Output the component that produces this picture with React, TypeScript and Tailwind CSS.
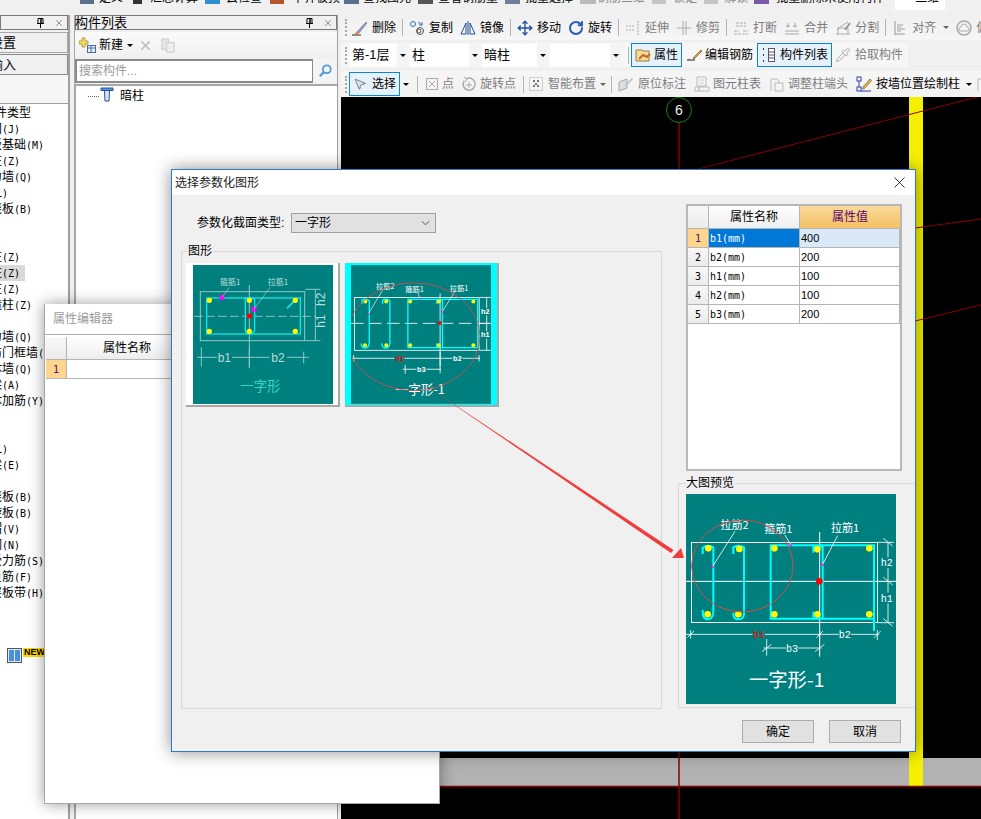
// App.tsx
import React from 'react';
import { Move, RotateCw, Pipette, MousePointer2, X } from 'lucide-react';

const topItems = [
  { gap: 'ml-[80px]', stub: 'w-[14px] bg-[#5a6f8c]', text: '定义', textGap: 'ml-[5px]' },
  { gap: 'ml-[10px]', stub: 'w-[9px] bg-[#333333]', text: '汇总计算', textGap: 'ml-[8px]' },
  { gap: 'ml-[7px]', stub: 'w-[15px] bg-[#2f8fd0]', text: '云检查', textGap: 'ml-[6px]' },
  { gap: 'ml-[8px]', stub: 'w-[14px] bg-[#b5562a]', text: '平齐板顶', textGap: 'ml-[8px]' },
  { gap: 'ml-[4px]', stub: 'w-[15px] bg-[#5a6f8c]', text: '查找图元', textGap: 'ml-[4px]' },
  { gap: 'ml-[7px]', stub: 'w-[15px] bg-[#555555]', text: '查看钢筋量', textGap: 'ml-[5px]' },
  { gap: 'ml-[7px]', stub: 'w-[15px] bg-[#6f7f99]', text: '批量选择', textGap: 'ml-[5px]' },
  { gap: 'ml-[7px]', stub: 'w-[16px] bg-[#b9b9b9]', text: '钢筋三维', textGap: 'ml-[1px] text-[#8a8a8a]' },
  { gap: 'ml-[7px]', stub: 'w-[14px] bg-[#c4c4c4]', text: '锁定', textGap: 'ml-[7px] text-[#8a8a8a]' },
  { gap: 'ml-[7px]', stub: 'w-[14px] bg-[#c4c4c4]', text: '解锁', textGap: 'ml-[6px] text-[#8a8a8a]' },
  { gap: 'ml-[6px]', stub: 'w-[15px] bg-[#7a5aa8]', text: '批量删除未使用构件', textGap: 'ml-[7px]' },
];

const treeRows: [string, string][] = [
  ['', ''],
  ['轴网', '(J)'],
  ['筏板基础', '(M)'],
  ['框柱', '(Z)'],
  ['剪力墙', '(Q)'],
  ['梁', '(L)'],
  ['现浇板', '(B)'],
  ['', ''],
  ['', ''],
  ['框柱', '(Z)'],
  ['暗柱', '(Z)'],
  ['端柱', '(Z)'],
  ['构造柱', '(Z)'],
  ['', ''],
  ['剪力墙', '(Q)'],
  ['人防门框墙', '(Q)'],
  ['砌体墙', '(Q)'],
  ['暗梁', '(A)'],
  ['砌体加筋', '(Y)'],
  ['', ''],
  ['', ''],
  ['梁', '(L)'],
  ['圈梁', '(E)'],
  ['', ''],
  ['现浇板', '(B)'],
  ['螺旋板', '(B)'],
  ['柱帽', '(V)'],
  ['板洞', '(N)'],
  ['板受力筋', '(S)'],
  ['板负筋', '(F)'],
  ['楼层板带', '(H)'],
];

const params = [
  ['1', 'b1(mm)', '400'],
  ['2', 'b2(mm)', '200'],
  ['3', 'h1(mm)', '100'],
  ['4', 'h2(mm)', '100'],
  ['5', 'b3(mm)', '200'],
];

const Ico = ({ children }: { children: React.ReactNode }) => (
  <svg viewBox="0 0 16 16" className="w-[16px] h-[16px] shrink-0" fill="none">
    {children}
  </svg>
);

const icons: Record<string, React.ReactNode> = {
  brush: (
    <Ico>
      <path d="M0 15h9" stroke="#222" />
      <path d="M5 12l9-10 1 1-8 10z" fill="#8b95c9" stroke="#555c88" strokeWidth=".5" />
      <path d="M2 14c2 0 2-3 4-3l1 2c-1 1-3 1-5 1z" fill="#e07a3a" />
    </Ico>
  ),
  copy: (
    <Ico>
      <circle cx="4" cy="4" r="2.5" stroke="#3b6ea8" />
      <circle cx="11" cy="11" r="3.5" stroke="#555" />
      <circle cx="10" cy="11" r="2" stroke="#555" />
      <path d="M9 2l4 3m0 0V2m0 3h-3" stroke="#3b6ea8" />
    </Ico>
  ),
  mirror: (
    <Ico>
      <path d="M8 1v14" stroke="#1f4e96" />
      <path d="M6 3L1 14h5zM10 3l5 11h-5z" stroke="#1f4e96" />
    </Ico>
  ),
  extend: (
    <Ico>
      <path d="M1 6h8M1 10h8M13 1v14" stroke="#aaa" strokeDasharray="2 1" />
    </Ico>
  ),
  trim: (
    <Ico>
      <path d="M7 1v14M10 1v14M1 8h14" stroke="#aaa" />
    </Ico>
  ),
  breakLine: (
    <Ico>
      <path d="M1 11h5M10 11h5M1 14h14M3 3h10M3 6h10" stroke="#aaa" strokeDasharray="3 1" />
    </Ico>
  ),
  merge: (
    <Ico>
      <path d="M1 11h14M1 14h14M4 3v5M11 3v5M2 6h4M9 6h4" stroke="#aaa" />
    </Ico>
  ),
  split: (
    <Ico>
      <path d="M1 14h14M2 9l11-7M3 14V8h10v6" stroke="#aaa" />
      <path d="M10 10l5-7" stroke="#999" strokeWidth="2" />
    </Ico>
  ),
  align: (
    <Ico>
      <path d="M3 1v14M3 14h10M6 5h5M6 9h7" stroke="#999" />
      <rect x="5" y="4" width="4" height="8" fill="#ccc" />
    </Ico>
  ),
  cloud: (
    <Ico>
      <circle cx="8" cy="8" r="7" stroke="#aaa" strokeWidth="1.5" />
      <path d="M5 11h6a2 2 0 000-4 3 3 0 00-6 0 2 2 0 000 4z" stroke="#aaa" />
    </Ico>
  ),
  props: (
    <Ico>
      <path d="M1 3h6l1 1h6v10H1z" fill="#f4dc9c" stroke="#a07a30" />
      <path d="M4 12l4-4 4 2 3-3" stroke="#c46a1a" strokeWidth="2" />
    </Ico>
  ),
  edit: (
    <Ico>
      <path d="M0 13h8" stroke="#222" />
      <path d="M1 13l2-1M6 11l8-8 1 1-8 8z" fill="#e6b34a" stroke="#6a4a1a" strokeWidth=".7" />
    </Ico>
  ),
  list: (
    <Ico>
      <path d="M2 2h2M2 8h2M2 14h2" stroke="#333" strokeWidth="2" strokeDasharray="1 1" />
      <rect x="7.500" y="1.500" width="6" height="13" fill="#fff" stroke="#556" />
      <path d="M8 5h5M8 8h5M8 11h5" stroke="#556" />
    </Ico>
  ),
  point: (
    <Ico>
      <rect x="2.500" y="2.500" width="11" height="11" stroke="#aaa" />
      <path d="M5 5l6 6M11 5l-6 6" stroke="#aaa" />
    </Ico>
  ),
  rotatePt: (
    <Ico>
      <path d="M5 3a6 6 0 11-2 2" stroke="#aaa" strokeWidth="1.5" />
      <path d="M8 6v6M5 9h6M3 1l3 2-2 3" stroke="#aaa" />
    </Ico>
  ),
  smart: (
    <Ico>
      <rect x="1.500" y="1.500" width="13" height="13" stroke="#aaa" strokeDasharray="1 1" />
      <path d="M5 5h2M9 5h2M5 10h2M9 10h2M8 7v2" stroke="#777" strokeWidth="2" />
    </Ico>
  ),
  label: (
    <Ico>
      <path d="M1 15V6l8-3v9z" fill="#ddd" stroke="#aaa" />
      <path d="M7 9l7-7 1 1-7 7z" fill="#bbb" />
    </Ico>
  ),
  table: (
    <Ico>
      <path d="M3 1h9v9H3zM1 11h4v4H1zM5 11h10v4H5z" stroke="#bbb" />
      <path d="M5 4h5M5 7h5" stroke="#ccc" />
    </Ico>
  ),
  doc: (
    <Ico>
      <path d="M2 15V3h6l2 2v2h4v8H6V7h4" stroke="#bbb" />
    </Ico>
  ),
  draw: (
    <Ico>
      <rect x="1" y="1" width="4" height="4" stroke="#2a3fa8" />
      <rect x="1" y="11" width="4" height="4" stroke="#2a3fa8" />
      <path d="M5 15h10M3 5v6" stroke="#2a3fa8" />
      <path d="M7 11l7-8 1.500 1.500-7 8-2 .5z" fill="#e6b34a" stroke="#6a4a1a" strokeWidth=".6" />
    </Ico>
  ),
};

const Caret = ({ tone = 'border-t-black' }: { tone?: string }) => (
  <span className={`block w-0 h-0 shrink-0 border-x-[3px] border-x-transparent border-t-[3px] ${tone}`} />
);

const Grip = () => <span className="block shrink-0 w-0 h-[17px] border-l-2 border-dotted border-[#a8a8a8]" />;

const Sep = () => <span className="block shrink-0 w-px h-[17px] bg-[#b4b4b4] -mx-px" />;

const Tool = ({ icon, label, off = false, gap = 'gap-[4px]' }: { icon: React.ReactNode; label: string; off?: boolean; gap?: string }) => (
  <span className={`flex items-center shrink-0 ${gap} ${off ? 'text-[#7d7d7d]' : 'text-black'}`}>
    {icon}
    <span>{label}</span>
  </span>
);

const Combo = ({ text, width }: { text: string; width: string }) => (
  <span className={`flex items-center justify-between h-[23px] bg-white shrink-0 ${width}`}>
    <span className="pl-[2px] text-[13px]">{text}</span>
    <span className="flex items-center justify-center w-[11px] h-full bg-[#f4f4f4]">
      <Caret />
    </span>
  </span>
);

const PanelHead = ({ title }: { title: string }) => (
  <div className="flex items-center justify-between h-[15px] border border-[#7a7a7a] bg-[#f0f0f0] pr-[3px] text-[13px] leading-[13px]">
    <span className="-ml-px">{title}</span>
    <span className="flex items-center gap-[9px]">
      <svg viewBox="0 0 9 10" className="w-[9px] h-[10px]" fill="none">
        <path d="M2 .5h5v5H2zM1 5.500h7M4.500 6v4" stroke="#000" />
        <path d="M5 1v4" stroke="#000" strokeWidth="1.500" />
      </svg>
      <X size={10} strokeWidth={1} className="text-black" />
    </span>
  </div>
);

const LeftPanel = () => (
  <div className="w-[70px] shrink-0 flex flex-col overflow-hidden border-r-2 border-[#a0a0a0] bg-white">
    <PanelHead title="" />
    <div className="bg-[#f0f0f0] pt-[2px]">
      <div className="h-[21px] border border-[#a8a8a8] flex items-center text-[13px] -ml-[12px] mb-px">
        <span className="-ml-[12px]">楼设置</span>
      </div>
      <div className="h-[21px] border border-[#8a8a8a] flex items-center text-[13px] -ml-[12px]">
        <span className="-ml-[12px]">输输入</span>
      </div>
      <div className="h-[28px] bg-[#f6f6f6]" />
    </div>
    <div className="flex-1 border-t border-[#a0a0a0] pt-[1px] text-[12px]">
      {treeRows.map((row, i) => (
        <div key={i} className={`h-[16px] leading-[16px] whitespace-nowrap ${i === 10 ? 'bg-[#d9d9d9] w-[25px]' : ''}`}>
          {i === 0 ? (
            <span className="block -ml-[41px]">常用构件类型</span>
          ) : (
            <span className="block -ml-[22px]">
              {row[0]}
              <span className="font-['DejaVu_Sans_Mono',monospace] text-[10px]">{row[1]}</span>
            </span>
          )}
        </div>
      ))}
      <div className="mt-[47px] flex items-center gap-[7px] -ml-[1px]">
        <span className="w-px h-[12px] bg-black" />
        <span className="flex gap-[1px] items-center justify-center w-[15px] h-[15px] border border-[#555] bg-[#dbe9f8]">
          <span className="w-[5px] h-[11px] bg-[#4a90d9]" />
          <span className="w-[5px] h-[11px] bg-[#4a90d9]" />
        </span>
        <span className="-ml-[6px] -mt-[6px] h-[9px] leading-[9px] px-px bg-[#ffd700] font-['Liberation_Sans',sans-serif] text-[9px] font-bold">
          NEW
        </span>
      </div>
    </div>
  </div>
);

const ListPanel = () => (
  <div className="w-[263px] shrink-0 flex flex-col border-r border-[#a0a0a0] bg-[#f0f0f0]">
    <PanelHead title="构件列表" />
    <div className="flex items-center h-[26px] mt-[2px] bg-gradient-to-b from-[#fafafa] to-[#f0f0f0] pl-[4px] text-[12px]">
      <svg viewBox="0 0 17 17" className="w-[17px] h-[17px] shrink-0" fill="none">
        <path d="M3 1h3v3h3v3H6v3H3V7H0V4h3z" fill="#f5dd6a" stroke="#a8902a" strokeWidth=".8" />
        <rect x="8.500" y="8.500" width="8" height="7" fill="#e8f0fa" stroke="#4a6fa8" />
        <path d="M8 11h8M12 9v6" stroke="#4a6fa8" />
      </svg>
      <span className="ml-[3px]">新建</span>
      <span className="ml-[4px]">
        <Caret />
      </span>
      <X size={15} strokeWidth={2.5} className="ml-[5px] text-[#bdbdbd]" />
      <svg viewBox="0 0 16 16" className="w-[15px] h-[15px] ml-[8px]" fill="none">
        <path d="M1 1h7v11H1z" fill="#e6e6e6" stroke="#c8c8c8" />
        <path d="M6 5h8v10H6z" fill="#efefef" stroke="#c8c8c8" />
      </svg>
    </div>
    <div className="flex h-[24px] mt-[1px]">
      <div className="flex-1 border-2 border-[#8a8a8a] border-r-0 bg-white flex items-center pl-[2px] text-[12px] text-[#9a9a9a]">
        搜索构件...
      </div>
      <div className="w-[25px] flex items-center justify-center bg-[#f4f4f4] border-l border-[#8a8a8a]">
        <svg viewBox="0 0 16 16" className="w-[14px] h-[14px]" fill="none">
          <circle cx="10" cy="6" r="4.500" stroke="#4a9de0" strokeWidth="2" />
          <path d="M7 9l-5 5" stroke="#4a9de0" strokeWidth="2.500" />
        </svg>
      </div>
    </div>
    <div className="flex-1 mt-[1px] bg-white border-t-2 border-l border-[#a8a8a8] pl-[12px] pt-[1px] flex items-start">
      <span className="w-[11px] mt-[9px] border-t border-dotted border-[#666]" />
      <svg viewBox="0 0 14 15" className="w-[14px] h-[15px] ml-px" fill="none">
        <path d="M1 1h12v2.500H1z" fill="#5b8fd6" stroke="#24519c" />
        <path d="M4.500 4l.5 10h4l.5-10" fill="#d7e6f8" stroke="#24519c" />
      </svg>
      <span className="ml-[6px] text-[12px] leading-[18px]">暗柱</span>
    </div>
  </div>
);

const ToolRows = () => (
  <div className="h-[82px] shrink-0 flex flex-col bg-[#f0f0f0] text-[12px]">
    <div className="h-[25px] flex items-center gap-[7px] pl-[4px] bg-gradient-to-b from-[#f0f0f0] to-[#f6f6f6] whitespace-nowrap overflow-hidden">
      <span className="mr-[-2px]">
        <Grip />
      </span>
      <Tool icon={icons.brush} label="删除" />
      <Sep />
      <Tool icon={icons.copy} label="复制" />
      <Tool icon={icons.mirror} label="镜像" />
      <Sep />
      <Tool icon={<Move size={16} strokeWidth={2} className="text-[#1f4e96]" />} label="移动" />
      <Tool icon={<RotateCw size={16} strokeWidth={3} className="text-[#2a5cb8]" />} label="旋转" />
      <Sep />
      <Tool icon={icons.extend} label="延伸" off />
      <Tool icon={icons.trim} label="修剪" off />
      <Sep />
      <Tool icon={icons.breakLine} label="打断" off />
      <Tool icon={icons.merge} label="合并" off />
      <Tool icon={icons.split} label="分割" off />
      <Sep />
      <Tool icon={icons.align} label="对齐" off />
      <Caret tone="border-t-[#666666]" />
      <Tool icon={icons.cloud} label="偏移" off />
    </div>
    <div className="w-[567px] h-[24px] mt-[3px] flex items-center pl-[4px] bg-[#f6f6f6] whitespace-nowrap">
      <Grip />
      <span className="ml-[3px] flex gap-[2px]">
        <Combo text="第-1层" width="w-[58px]" />
        <Combo text="柱" width="w-[70px]" />
        <Combo text="暗柱" width="w-[66px]" />
        <Combo text="" width="w-[71px]" />
      </span>
      <span className="ml-[8px] mr-[2px]">
        <Sep />
      </span>
      <span className="h-[24px] w-[51px] border border-[#0a84e0] bg-[#e5f1fb] flex items-center justify-center gap-[3px] shrink-0">
        {icons.props}
        <span>属性</span>
      </span>
      <span className="ml-[4px] w-[70px] flex items-center gap-[2px] shrink-0 pl-[1px]">
        {icons.edit}
        <span>编辑钢筋</span>
      </span>
      <span className="ml-[1px] h-[24px] w-[75px] border border-[#0a84e0] bg-[#e5f1fb] flex items-center justify-center gap-[3px] shrink-0">
        {icons.list}
        <span>构件列表</span>
      </span>
      <span className="ml-[3px] flex items-center gap-[4px] shrink-0 text-[#7d7d7d]">
        <Pipette size={16} strokeWidth={1.5} className="text-[#b0b0b0]" />
        <span>拾取构件</span>
      </span>
    </div>
    <div className="h-[26px] mt-[4px] flex items-center pl-[4px] bg-gradient-to-b from-[#f6f6f6] to-[#f2f2f2] whitespace-nowrap overflow-hidden">
      <Grip />
      <span className="ml-[2px] h-[24px] w-[51px] border border-[#0a84e0] bg-[#e5f1fb] flex items-center gap-[5px] pl-[3px] shrink-0">
        <MousePointer2 size={14} strokeWidth={1} className="text-[#333]" fill="#dbe6f5" />
        <span>选择</span>
      </span>
      <span className="ml-[3px]">
        <Caret />
      </span>
      <span className="ml-[9px]">
        <Sep />
      </span>
      <span className="ml-[6px]">
        <Tool icon={icons.point} label="点" off gap="gap-[2px]" />
      </span>
      <span className="ml-[7px]">
        <Tool icon={icons.rotatePt} label="旋转点" off gap="gap-[3px]" />
      </span>
      <span className="ml-[8px]">
        <Sep />
      </span>
      <span className="ml-[4px]">
        <Tool icon={icons.smart} label="智能布置" off />
      </span>
      <span className="ml-[4px]">
        <Caret tone="border-t-[#666666]" />
      </span>
      <span className="ml-[6px]">
        <Sep />
      </span>
      <span className="ml-[6px]">
        <Tool icon={icons.label} label="原位标注" off />
      </span>
      <span className="ml-[8px]">
        <Tool icon={icons.table} label="图元柱表" off gap="gap-[3px]" />
      </span>
      <span className="ml-[8px]">
        <Tool icon={icons.doc} label="调整柱端头" off gap="gap-[3px]" />
      </span>
      <span className="ml-[8px]">
        <Tool icon={icons.draw} label="按墙位置绘制柱" />
      </span>
      <span className="ml-[6px]">
        <Caret />
      </span>
      <span className="ml-[4px]">{icons.doc}</span>
    </div>
  </div>
);

const Canvas = () => (
  <div className="flex-1 min-h-0 bg-black overflow-hidden">
    <svg viewBox="341 97 640 722" className="block w-[640px] h-[722px]" fill="none">
      <rect x="341" y="758" width="640" height="28" fill="#b2b2b2" />
      <rect x="909" y="97" width="14" height="689" fill="#f5f000" />
      <path d="M679 122V819M341 786.500H981" stroke="#8b0000" strokeWidth="1.500" />
      <path d="M698 169L981 96M915 228L981 219M915 321L981 305" stroke="#8b0000" />
      <circle cx="679" cy="110" r="12.500" stroke="#0a8a0a" />
      <text x="679" y="115" textAnchor="middle" fill="#eeeeee" fontSize="14" className="font-['Liberation_Sans',sans-serif]">
        6
      </text>
    </svg>
  </div>
);

const Editor = () => (
  <div className="absolute left-[44px] top-[304px] w-[396px] h-[500px] bg-white border border-[#a8a8a8] border-t-0 shadow-[0_0_14px_rgba(0,0,0,0.4)] text-[12px]">
    <div className="h-[31px] border-b border-[#b0b0b0] flex items-center pl-[8px] text-[#9a9a9a]">属性编辑器</div>
    <div className="pl-[1px] pt-[2px]">
      <div className="flex h-[23px] border-b border-[#b5b5b5]">
        <span className="w-[21px] bg-gradient-to-b from-[#f8f8f8] to-[#ebebeb] border-r border-[#b5b5b5]" />
        <span className="w-[120px] flex items-center justify-center bg-gradient-to-b from-white to-[#eeeeee]">属性名称</span>
      </div>
      <div className="flex h-[19px] border-b border-[#b5b5b5]">
        <span className="w-[21px] bg-[#fdd58c] border-r border-[#b5b5b5] flex items-center justify-center font-['DejaVu_Sans_Mono',monospace] text-[10px] text-[#50107a]">
          1
        </span>
      </div>
    </div>
  </div>
);

const ThumbOne = () => (
  <svg viewBox="63 285 420 417" className="block w-[140px] h-[139px]" fill="none">
    <rect x="63" y="285" width="420" height="417" fill="#007f7f" />
    <rect x="85" y="365" width="313" height="147" stroke="#8fc8c4" strokeWidth="3" />
    <path d="M66 439H430" stroke="#c8e4e0" strokeWidth="2" strokeDasharray="26 10" />
    <path d="M232 345V595" stroke="#8fc8c4" strokeWidth="3" />
    <rect x="104" y="384" width="281" height="108" stroke="#16e4e4" strokeWidth="4" />
    <path d="M220 392V480Q220 492 232 492T248 480V392Q248 384 232 384T220 392" stroke="#16e4e4" strokeWidth="4" />
    <path d="M345 415L368 392" stroke="#16e4e4" strokeWidth="5" />
    <g fill="#ffff00">
      <circle cx="112" cy="391" r="8" />
      <circle cx="232" cy="391" r="8" />
      <circle cx="370" cy="391" r="8" />
      <circle cx="112" cy="484" r="8" />
      <circle cx="232" cy="484" r="8" />
      <circle cx="370" cy="484" r="8" />
    </g>
    <rect x="225" y="431" width="14" height="14" fill="#ff0000" />
    <rect x="143" y="375" width="14" height="14" fill="#ff00ff" />
    <rect x="239" y="411" width="14" height="14" fill="#ff00ff" />
    <path d="M150 382L172 352M246 418L294 352" stroke="#a8d4d0" strokeWidth="2" />
    <path d="M75 562H135M180 562H292M345 562H410M88 532V590M232 532V590M395 545V580M400 358H445M400 512H445M430 358V512" stroke="#8fc8c4" strokeWidth="3" />
    <g fill="#bcdcd8" fontSize="24" textAnchor="middle" className="font-['Noto_Sans_CJK_SC',sans-serif]">
      <text x="175" y="346">箍筋1</text>
      <text x="318" y="346">拉筋1</text>
    </g>
    <g fill="#bcdcd8" fontSize="36" textAnchor="middle" className="font-['Liberation_Sans',sans-serif]">
      <text x="157" y="575">b1</text>
      <text x="318" y="575">b2</text>
      <text x="470" y="400" transform="rotate(-90 458 400)">h2</text>
      <text x="470" y="465" transform="rotate(-90 458 465)">h1</text>
    </g>
    <text x="265" y="662" textAnchor="middle" fill="#30d8c8" fontSize="40" className="font-['Noto_Sans_CJK_SC',sans-serif]">
      一字形
    </text>
  </svg>
);

const ThumbTwo = () => (
  <svg viewBox="537 285 421 417" className="block w-[140px] h-[139px]" fill="none">
    <rect x="537" y="285" width="421" height="417" fill="#007f7f" />
    <rect x="547.500" y="382" width="375" height="159" stroke="#ffffff" strokeWidth="2.500" />
    <path d="M537 460H958" stroke="#ffffff" strokeWidth="2.500" strokeDasharray="38 16" />
    <path d="M805 370V590" stroke="#ffffff" strokeWidth="2.500" />
    <g stroke="#00ffff" strokeWidth="4">
      <path d="M708 533V388H918V533H708" />
      <path d="M795 402V390H812V533H795V520" />
      <path d="M570 402V390Q582 384 592 392V520Q590 534 578 534Q568 534 568 520" />
      <path d="M632 402V390Q644 384 654 392V520Q652 534 640 534Q630 534 630 520" />
    </g>
    <g fill="#ffff00">
      <circle cx="580" cy="394" r="6" />
      <circle cx="643" cy="394" r="6" />
      <circle cx="715" cy="394" r="6" />
      <circle cx="801" cy="394" r="6" />
      <circle cx="905" cy="394" r="6" />
      <circle cx="579" cy="526" r="6" />
      <circle cx="643" cy="526" r="6" />
      <circle cx="715" cy="526" r="6" />
      <circle cx="801" cy="526" r="6" />
      <circle cx="905" cy="526" r="6" />
    </g>
    <circle cx="804" cy="459" r="6" fill="#ff0000" />
    <g fill="#ff00ff">
      <circle cx="590" cy="430" r="3" />
      <circle cx="745" cy="385" r="3" />
      <circle cx="812" cy="424" r="3" />
    </g>
    <path d="M590 430L632 360M745 385L738 368M812 424L848 366" stroke="#ffffff" strokeWidth="2" />
    <path d="M540 565H925M692 598H808M545 555V575M805 545V610M922 555V575M700 585V612M945 382V541M925 382H958M925 460H958M925 541H958" stroke="#ffffff" strokeWidth="2.500" />
    <g fontSize="22" textAnchor="middle" className="font-['Noto_Sans_CJK_SC',sans-serif]" fill="#ffffff">
      <text x="640" y="356">拉筋2</text>
      <text x="728" y="366">箍筋1</text>
      <text x="862" y="362">拉筋1</text>
    </g>
    <g fontSize="22" textAnchor="middle" fontWeight="700" className="font-['Liberation_Mono',monospace]">
      <rect x="926" y="414" width="30" height="22" fill="#007f7f" />
      <rect x="926" y="484" width="30" height="22" fill="#007f7f" />
      <rect x="668" y="556" width="30" height="20" fill="#007f7f" />
      <rect x="842" y="556" width="30" height="20" fill="#007f7f" />
      <rect x="734" y="588" width="30" height="20" fill="#007f7f" />
      <text x="941" y="432" fill="#ffffff">h2</text>
      <text x="941" y="502" fill="#ffffff">h1</text>
      <text x="683" y="574" fill="#ff0000">b1</text>
      <text x="857" y="574" fill="#ffffff">b2</text>
      <text x="749" y="606" fill="#ffffff">b3</text>
    </g>
    <text x="745" y="672" textAnchor="middle" fill="#ffffff" fontSize="38" className="font-['Noto_Sans_CJK_SC',sans-serif]">
      一字形-1
    </text>
    <ellipse cx="725" cy="500" rx="200" ry="162" stroke="#d84848" strokeWidth="2.500" />
  </svg>
);

const BigPreview = () => (
  <svg viewBox="48 72 630 630" className="block w-[210px] h-[210px]" fill="none">
    <rect x="48" y="72" width="630" height="630" fill="#007f7f" />
    <rect x="64.500" y="217.500" width="558" height="240" stroke="#ffffff" strokeWidth="3" />
    <path d="M48 334H678M449 186V560" stroke="#ffffff" strokeWidth="3" />
    <g stroke="#00ffff" strokeWidth="6">
      <path d="M612 483V226H302V446H612" />
      <path d="M430 248V230H458V445H430V425" />
      <path d="M98 252V234Q112 222 130 232V426Q128 448 112 448Q98 448 98 420" />
      <path d="M190 252V232Q206 222 222 232V432Q220 448 206 448Q190 448 190 428" />
    </g>
    <g fill="#ffff00">
      <circle cx="115" cy="235" r="10" />
      <circle cx="208" cy="237" r="10" />
      <circle cx="313" cy="235" r="10" />
      <circle cx="442" cy="238" r="10" />
      <circle cx="598" cy="235" r="10" />
      <circle cx="113" cy="433" r="10" />
      <circle cx="205" cy="433" r="10" />
      <circle cx="313" cy="433" r="10" />
      <circle cx="442" cy="433" r="10" />
      <circle cx="598" cy="433" r="10" />
    </g>
    <circle cx="448" cy="334" r="10" fill="#ff0000" />
    <g fill="#ff00ff">
      <circle cx="128" cy="289" r="4" />
      <circle cx="362" cy="224" r="4" />
      <circle cx="458" cy="283" r="4" />
    </g>
    <path d="M128 289L195 184M362 224L345 195M458 283L503 197" stroke="#ffffff" strokeWidth="2.500" />
    <path
      d="M622 217H672M622 458H672M654 217V458M640 205L668 228M640 322L668 345M640 446L668 469M48 493H628M62 480V506M449 480V506M622 480V510M52 503L72 483M439 503L459 483M612 503L632 483M280 534H455M290 507V557M276 545L304 523M435 545L463 523"
      stroke="#ffffff"
      strokeWidth="2.500"
    />
    <g fontSize="33" textAnchor="middle" className="font-['Noto_Sans_CJK_SC',sans-serif]" fill="#ffffff">
      <text x="194" y="178">拉筋2</text>
      <text x="325" y="189">箍筋1</text>
      <text x="525" y="186">拉筋1</text>
    </g>
    <g fontSize="30" textAnchor="middle" className="font-['Liberation_Mono',monospace]">
      <rect x="632" y="262" width="36" height="32" fill="#007f7f" />
      <rect x="632" y="368" width="36" height="32" fill="#007f7f" />
      <rect x="248" y="478" width="36" height="30" fill="#007f7f" />
      <rect x="506" y="478" width="36" height="30" fill="#007f7f" />
      <rect x="348" y="520" width="36" height="30" fill="#007f7f" />
      <text x="650" y="289" fill="#ffffff">h2</text>
      <text x="650" y="395" fill="#ffffff">h1</text>
      <text x="266" y="503" fill="#ff0000">b1</text>
      <text x="524" y="503" fill="#ffffff">b2</text>
      <text x="366" y="545" fill="#ffffff">b3</text>
    </g>
    <text x="350" y="652" textAnchor="middle" fill="#ffffff" fontSize="58" className="font-['Noto_Sans_CJK_SC',sans-serif]">
      一字形-1
    </text>
    <ellipse cx="217" cy="288" rx="152" ry="138" stroke="#d84848" strokeWidth="3" />
  </svg>
);

const ParamTable = () => (
  <div className="ml-[8px] w-[216px] h-[267px] border-2 border-[#b8b8b8] bg-white text-[12px]">
    <div className="flex h-[23px] border-b border-[#b5b5b5] w-[212px]">
      <span className="w-[21px] bg-gradient-to-b from-[#f8f8f8] to-[#ebebeb] border-r border-[#b5b5b5]" />
      <span className="w-[91px] flex items-center justify-center bg-gradient-to-b from-white to-[#eeeeee] border-r border-[#b5b5b5]">属性名称</span>
      <span className="w-[100px] flex items-center justify-center bg-gradient-to-b from-[#fbd99a] to-[#f3c063] text-[#5a0a6a]">属性值</span>
    </div>
    {params.map((row, i) => (
      <div key={row[0]} className="flex h-[19px] w-[212px] border-b border-[#b5b5b5] border-r">
        <span
          className={`w-[21px] flex items-center justify-center border-r border-[#b5b5b5] font-['DejaVu_Sans_Mono',monospace] text-[10px] ${
            i === 0 ? 'bg-[#fdd58c] text-[#50107a]' : 'bg-gradient-to-b from-[#f8f8f8] to-[#ebebeb]'
          }`}
        >
          {row[0]}
        </span>
        <span
          className={`w-[91px] flex items-center pl-[1px] border-r border-[#b5b5b5] font-['DejaVu_Sans_Mono',monospace] text-[10px] ${
            i === 0 ? 'bg-[#0078d7] text-white' : ''
          }`}
        >
          {row[1]}
        </span>
        <span className={`flex-1 flex items-center pl-[1px] font-['Liberation_Sans',sans-serif] text-[11px] ${i === 0 ? 'bg-[#d9e9f7]' : ''}`}>
          {row[2]}
        </span>
      </div>
    ))}
  </div>
);

const Dialog = () => (
  <div className="absolute left-[171px] top-[169px] w-[745px] h-[583px] flex flex-col bg-[#f0f0f0] border border-[#2b7cc4] shadow-[0_0_16px_rgba(0,0,0,0.45)] text-[12px]">
    <div className="h-[25px] shrink-0 bg-white flex items-center justify-between pl-[3px] pr-[6px]">
      <span className="text-[#222]">选择参数化图形</span>
      <X size={19} strokeWidth={1} className="text-black" />
    </div>
    <div className="flex h-[514px] shrink-0">
      <div className="ml-[9px] w-[481px] shrink-0 flex flex-col">
        <div className="flex items-center h-[20px] mt-[18px] pl-[16px]">
          <span className="w-[94px]">参数化截面类型:</span>
          <span className="w-[145px] h-[20px] flex items-center justify-between bg-[#e1e1e1] border border-[#a0a0a0] pl-[3px] pr-[5px]">
            一字形
            <svg viewBox="0 0 10 6" className="w-[9px] h-[6px]" fill="none">
              <path d="M1 1l4 4 4-4" stroke="#444" />
            </svg>
          </span>
        </div>
        <div className="relative mt-[18px] h-[458px] border border-[#d8d8d8] pl-[4px] pt-[11px] flex gap-[5px] items-start">
          <span className="absolute left-[6px] -top-[8px] bg-[#f0f0f0] pr-[1px] leading-[14px]">图形</span>
          <div className="w-[154px] h-[144px] bg-white border-r-2 border-b-2 border-[#a8a8a8] pl-[7px] pt-[2px]">
            <ThumbOne />
          </div>
          <div className="w-[154px] h-[144px] bg-[#00ffff] border-r-2 border-b-2 border-[#a8a8a8] pl-[6px] pt-[2px]">
            <ThumbTwo />
          </div>
        </div>
      </div>
      <div className="ml-[16px] flex-1 flex flex-col">
        <div className="pt-[9px]">
          <ParamTable />
        </div>
        <div className="relative mt-[12px] h-[225px] border border-r-0 border-[#d8d8d8] pl-[7px] pt-[10px]">
          <span className="absolute left-[7px] -top-[8px] bg-[#f0f0f0] pr-[1px] leading-[14px]">大图预览</span>
          <BigPreview />
        </div>
      </div>
    </div>
    <div className="flex justify-end gap-[15px] pt-[11px] pr-[14px]">
      <span className="w-[72px] h-[23px] flex items-center justify-center bg-[#e1e1e1] border border-[#adadad]">确定</span>
      <span className="w-[72px] h-[23px] flex items-center justify-center bg-[#e1e1e1] border border-[#adadad]">取消</span>
    </div>
  </div>
);

const App: React.FC = () => {
  return (
    <div className="relative w-[981px] h-[819px] overflow-hidden flex flex-col bg-[#f0f0f0] text-black font-['Liberation_Sans','Noto_Sans_CJK_SC',sans-serif]">
      <div className="h-[15px] shrink-0 overflow-hidden flex items-start text-[12px] leading-[12px] relative">
        {topItems.map((it) => (
          <span key={it.text} className={`flex shrink-0 -mt-[8px] ${it.gap}`}>
            <span className={`h-[12px] ${it.stub}`} />
            <span className={it.textGap}>{it.text}</span>
          </span>
        ))}
        <span className="ml-[11px] -mt-[8px] w-[50px] h-[18px] bg-white flex pl-[20px] shrink-0">二维</span>
      </div>
      <div className="flex-1 min-h-0 flex">
        <LeftPanel />
        <div className="w-[5px] shrink-0 border-r border-[#a8a8a8]" />
        <ListPanel />
        <div className="w-[3px] shrink-0" />
        <div className="flex-1 min-w-0 flex flex-col">
          <ToolRows />
          <Canvas />
        </div>
      </div>
      <Editor />
      <Dialog />
      <svg viewBox="0 0 981 819" className="absolute inset-0 w-[981px] h-[819px] pointer-events-none" fill="none">
        <path d="M425 385L673.500 550L671 553z" fill="#f23c3c" />
        <path d="M684 558L672 558L681 548z" fill="#f23c3c" />
      </svg>
    </div>
  );
};

export default App;
